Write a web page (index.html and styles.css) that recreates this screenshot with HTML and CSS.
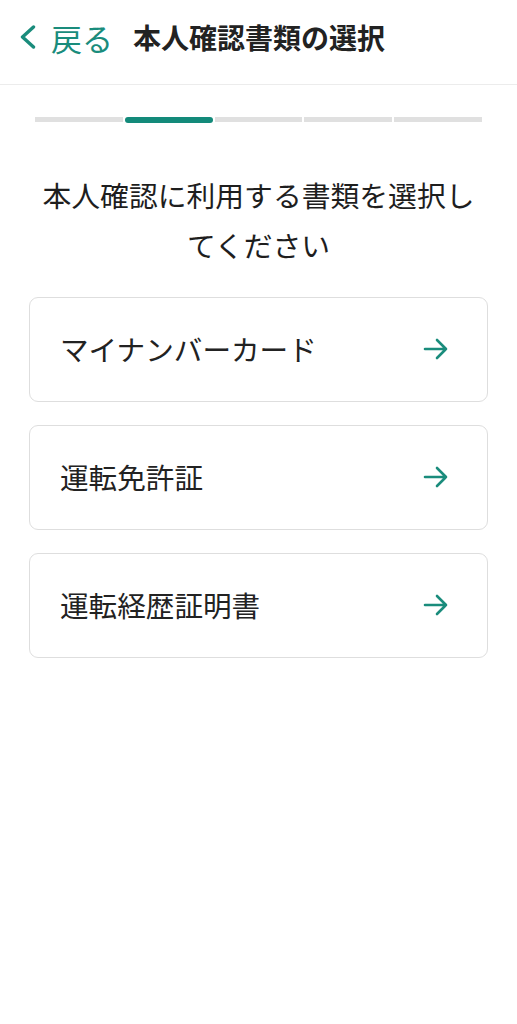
FILE: index.html
```html
<!DOCTYPE html>
<html lang="ja">
<head>
<meta charset="utf-8">
<link rel="stylesheet" href="styles.css">
</head>
<body>
<header class="header">
  <a class="back">
    <svg class="chev" width="16" height="24" viewBox="0 0 16 24"><path d="M13.5 2 L2.5 12 L13.5 22" fill="none" stroke="#1a8c7c" stroke-width="3.4" stroke-linecap="round" stroke-linejoin="round"/></svg>
    <span class="back-label">戻る</span>
  </a>
  <h1 class="title">本人確認書類の選択</h1>
</header>
<div class="progress">
  <span class="seg"></span>
  <span class="seg active"></span>
  <span class="seg"></span>
  <span class="seg"></span>
  <span class="seg"></span>
</div>
<h2 class="lead">本人確認に利用する書類を選択し<br>てください</h2>
<ul class="cards">
  <li class="card"><span class="card-label">マイナンバーカード</span><svg class="arrow" width="26" height="22" viewBox="0 0 26 22"><path d="M2 11 H23 M14 2 L23 11 L14 20" fill="none" stroke="#1a8c7c" stroke-width="2.6" stroke-linecap="round" stroke-linejoin="round"/></svg></li>
  <li class="card"><span class="card-label">運転免許証</span><svg class="arrow" width="26" height="22" viewBox="0 0 26 22"><path d="M2 11 H23 M14 2 L23 11 L14 20" fill="none" stroke="#1a8c7c" stroke-width="2.6" stroke-linecap="round" stroke-linejoin="round"/></svg></li>
  <li class="card"><span class="card-label">運転経歴証明書</span><svg class="arrow" width="26" height="22" viewBox="0 0 26 22"><path d="M2 11 H23 M14 2 L23 11 L14 20" fill="none" stroke="#1a8c7c" stroke-width="2.6" stroke-linecap="round" stroke-linejoin="round"/></svg></li>
</ul>
</body>
</html>
```
FILE: styles.css
```css
* { box-sizing: border-box; }
body {
  margin: 0;
  background: #fff;
  font-family: "Noto Sans CJK JP", "Noto Sans", sans-serif;
  color: #222;
}
.header {
  height: 85px;
  border-bottom: 1px solid #ececec;
  display: flex;
  align-items: center;
  padding: 0 0 10px 20px;
}
.back {
  display: flex;
  align-items: center;
  color: #1a8c7c;
  gap: 15px;
}
.back-label {
  font-size: 31px;
  line-height: 1;
}
.title {
  margin: 0 0 0 20px;
  font-size: 28px;
  font-weight: 700;
  color: #222;
  line-height: 1;
}
.progress {
  display: flex;
  gap: 2px;
  align-items: center;
  margin: 31px 35px 0;
  height: 7px;
}
.seg {
  flex: 1;
  height: 5px;
  background: #e0e0e0;
}
.seg.active {
  height: 6px;
  background: #138a7a;
  border-radius: 3px;
}
.lead {
  margin: 47px 0 0;
  text-align: center;
  font-size: 28.8px;
  font-weight: 400;
  line-height: 50px;
  color: #1e1e1e;
}
.cards {
  list-style: none;
  margin: 27px 29px 0;
  padding: 0;
  display: flex;
  flex-direction: column;
  gap: 23px;
}
.card {
  height: 105px;
  border: 1.5px solid #dedede;
  border-radius: 9px;
  display: flex;
  align-items: center;
  justify-content: space-between;
  padding: 0 38px 2px 30px;
}
.card-label {
  font-size: 28.6px;
  color: #222;
  font-weight: 400;
}
.arrow { display: block; }
```
